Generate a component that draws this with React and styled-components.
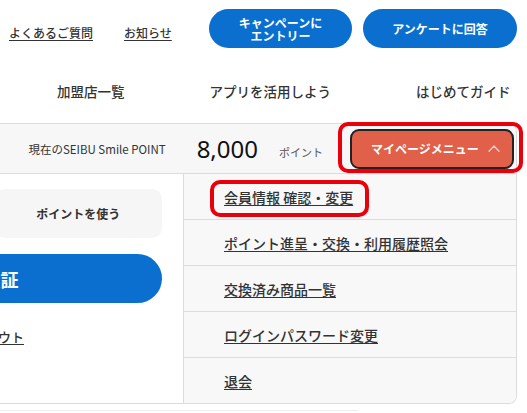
import React from 'react';
import styled, { createGlobalStyle } from 'styled-components';

const Global = createGlobalStyle`
  html, body { margin: 0; padding: 0; background: #fff; overflow: hidden; }
  body {
    font-family: "Noto Sans CJK JP", "Noto Sans", sans-serif;
    color: #333;
  }
  a { color: inherit; }
`;

const Page = styled.div`
  width: 527px;
  height: 413px;
  overflow: hidden;
`;

const TopBar = styled.div`
  display: flex;
  align-items: center;
  height: 57px;
  padding: 0 10px 0 9px;
  box-sizing: border-box;
`;

const Links = styled.div`
  display: flex;
  gap: 31px;
  margin-top: 7px;
`;

const TopLink = styled.a`
  font-size: 12px;
  font-weight: 500;
  color: #333;
  text-decoration: underline;
  text-underline-offset: 2px;
`;

const Buttons = styled.div`
  margin-left: auto;
  display: flex;
  gap: 11px;
`;

const PillButton = styled.a`
  width: ${p => p.$w}px;
  height: 39px;
  border-radius: 20px;
  background: #0a6fce;
  color: #fff;
  font-size: 12px;
  font-weight: 700;
  line-height: 13px;
  text-decoration: none;
  display: flex;
  align-items: center;
  justify-content: center;
  text-align: center;
`;

const Nav = styled.nav`
  display: flex;
  align-items: center;
  gap: 85px;
  height: 66px;
  padding-left: 57px;
  box-sizing: border-box;
`;

const NavItem = styled.a`
  font-size: 13.5px;
  font-weight: 500;
  color: #333;
  text-decoration: none;
  white-space: nowrap;
  margin-top: 2px;
`;

const Card = styled.div`
  margin-left: -200px;
  width: 717px;
  box-sizing: border-box;
  border: 1px solid #dcdcdc;
  border-left: none;
  border-radius: 0 8px 8px 0;
`;

const PointBar = styled.div`
  height: 49px;
  background: #f7f7f7;
  border-bottom: 1px solid #dcdcdc;
  border-top-right-radius: 8px;
  display: flex;
  align-items: center;
  justify-content: flex-end;
  padding-right: 2px;
`;

const PointLabel = styled.span`
  font-size: 11.5px;
  color: #333;
  margin-right: 31px;
`;

const PointValue = styled.span`
  font-size: 24px;
  color: #111;
  font-family: "Noto Sans", "Noto Sans CJK JP", sans-serif;
  margin-right: 21px;
`;

const PointUnit = styled.span`
  font-size: 11px;
  color: #555;
  margin-top: 7px;
  margin-right: 27px;
`;

const Annotated = styled.span`
  position: relative;
  display: inline-flex;
  &::after {
    content: "";
    position: absolute;
    top: ${p => p.$t}px;
    bottom: ${p => p.$b}px;
    left: ${p => p.$l}px;
    right: ${p => p.$r}px;
    border: 4px solid #e8000b;
    border-radius: 10px;
    pointer-events: none;
  }
`;

const MyPageButton = styled.button`
  width: 164px;
  height: 40px;
  box-sizing: border-box;
  background: #e0604a;
  border: 2px solid #222;
  border-radius: 9px;
  color: #fff;
  font-family: inherit;
  font-size: 12px;
  font-weight: 700;
  display: flex;
  align-items: center;
  justify-content: center;
  gap: 9px;
  padding: 0 0 0 7px;
`;

const Body = styled.div`
  display: flex;
`;

const LeftPanel = styled.div`
  width: 383px;
  box-sizing: border-box;
  padding: 15px 21px 0;
  background: #fff;
  border-bottom-left-radius: 8px;
  display: flex;
  flex-direction: column;
  align-items: stretch;
`;

const PointActions = styled.div`
  display: flex;
  gap: 6px;
`;

const GrayButton = styled.a`
  flex: 1;
  height: 49px;
  border-radius: 10px;
  background: #f6f6f6;
  font-size: 12px;
  font-weight: 700;
  color: #333;
  text-decoration: none;
  display: flex;
  align-items: center;
  justify-content: center;
`;

const BlueButton = styled.a`
  margin-top: 16px;
  height: 49px;
  border-radius: 25px;
  background: #0a6fce;
  color: #fff;
  font-size: 18px;
  font-weight: 700;
  text-decoration: none;
  display: flex;
  align-items: center;
  justify-content: center;
`;

const Logout = styled.a`
  align-self: center;
  margin-top: 24px;
  font-size: 13px;
  font-weight: 500;
  color: #333;
  text-decoration: underline;
  text-underline-offset: 2px;
`;

const MenuPanel = styled.ul`
  flex: 1;
  margin: 0;
  padding: 0;
  list-style: none;
  background: #f8f8f8;
  border-left: 1px solid #dcdcdc;
  border-bottom-right-radius: 8px;
`;

const MenuRow = styled.li`
  height: 45px;
  display: flex;
  align-items: center;
  padding-left: 40px;
  & + & { border-top: 1px solid #dcdcdc; }
`;

const MenuLink = styled.a`
  font-size: 14px;
  font-weight: 500;
  line-height: 20px;
  color: #333;
  text-decoration: underline;
  text-underline-offset: 2px;
  white-space: nowrap;
`;

const Footer = styled.div`
  margin: 6px 0 0 -200px;
  width: 558px;
  border-top: 1px solid #eeeeee;
`;

const Chevron = () => (
  <svg width="12" height="7" viewBox="0 0 12 7" fill="none">
    <path d="M1 6.2 L6 1 L11 6.2" stroke="#f6c9c0" strokeWidth="1.4" strokeLinecap="round" strokeLinejoin="round" />
  </svg>
);

const menu = [
  '会員情報 確認・変更',
  'ポイント進呈・交換・利用履歴照会',
  '交換済み商品一覧',
  'ログインパスワード変更',
  '退会',
];

export default function App() {
  return (
    <Page>
      <Global />
      <TopBar>
        <Links>
          <TopLink href="#">よくあるご質問</TopLink>
          <TopLink href="#">お知らせ</TopLink>
        </Links>
        <Buttons>
          <PillButton href="#" $w={143}>キャンペーンに<br />エントリー</PillButton>
          <PillButton href="#" $w={154}>アンケートに回答</PillButton>
        </Buttons>
      </TopBar>
      <Nav>
        <NavItem href="#">加盟店一覧</NavItem>
        <NavItem href="#">アプリを活用しよう</NavItem>
        <NavItem href="#">はじめてガイド</NavItem>
      </Nav>
      <Card>
        <PointBar>
          <PointLabel>現在のSEIBU Smile POINT</PointLabel>
          <PointValue>8,000</PointValue>
          <PointUnit>ポイント</PointUnit>
          <Annotated $t={-7} $b={-4} $l={-12} $r={-9}>
            <MyPageButton>
              マイページメニュー
              <Chevron />
            </MyPageButton>
          </Annotated>
        </PointBar>
        <Body>
          <LeftPanel>
            <PointActions>
              <GrayButton href="#">ポイントを貯める</GrayButton>
              <GrayButton href="#">ポイントを使う</GrayButton>
            </PointActions>
            <BlueButton href="#">会員証</BlueButton>
            <Logout href="#">ログアウト</Logout>
          </LeftPanel>
          <MenuPanel>
            {menu.map((m, i) => (
              <MenuRow key={m}>
                {i === 0 ? (
                  <Annotated $t={-7} $b={-10} $l={-14} $r={-16}>
                    <MenuLink href="#">{m}</MenuLink>
                  </Annotated>
                ) : (
                  <MenuLink href="#">{m}</MenuLink>
                )}
              </MenuRow>
            ))}
          </MenuPanel>
        </Body>
      </Card>
      <Footer />
    </Page>
  );
}
